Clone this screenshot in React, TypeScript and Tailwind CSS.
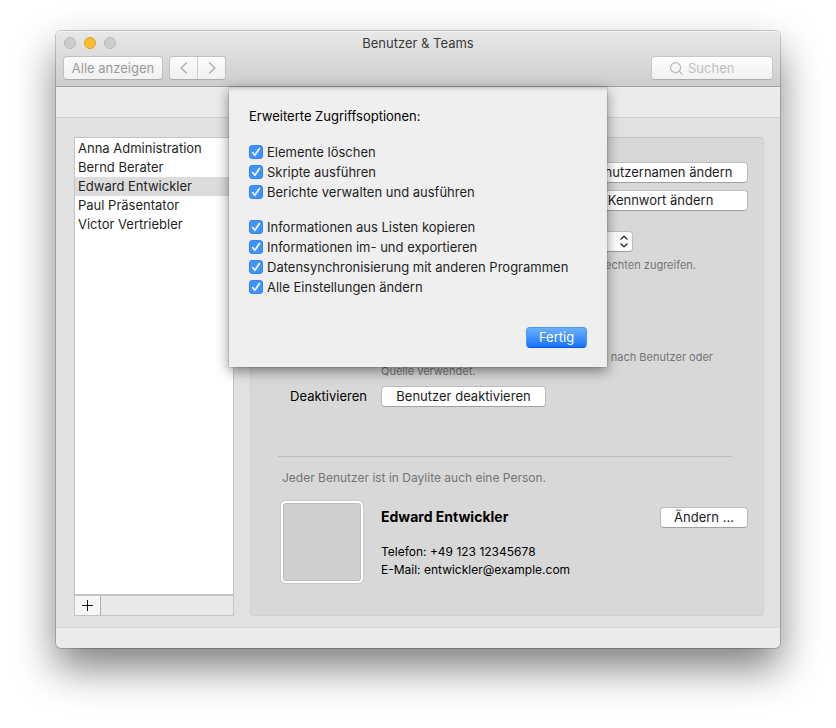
import { useState } from "react";
import type { ReactNode } from "react";

const users = [
  "Anna Administration",
  "Bernd Berater",
  "Edward Entwickler",
  "Paul Präsentator",
  "Victor Vertriebler",
];

const optionGroups = [
  ["Elemente löschen", "Skripte ausführen", "Berichte verwalten und ausführen"],
  [
    "Informationen aus Listen kopieren",
    "Informationen im- und exportieren",
    "Datensynchronisierung mit anderen Programmen",
    "Alle Einstellungen ändern",
  ],
];

function PushButton({ children, className = "" }: { children: ReactNode; className?: string }) {
  return (
    <button
      className={`h-[21px] shrink-0 rounded-[4px] border border-[#bdbdbd] border-b-[#a0a0a0] bg-white text-center leading-[19px] text-[#1c1c1c] ${className}`}
    >
      {children}
    </button>
  );
}

function CheckOption({ label }: { label: string }) {
  const [checked, setChecked] = useState(true);

  return (
    <label className="flex h-5 items-center gap-1">
      <span className="relative block size-[14px]">
        <input
          type="checkbox"
          checked={checked}
          onChange={(e) => setChecked(e.target.checked)}
          className="peer block size-[14px] appearance-none rounded-[3px] border border-[#b5b5b5] bg-white checked:border-[#3586f5] checked:bg-[#3f93fb]"
        />
        <svg
          viewBox="0 0 14 14"
          className="pointer-events-none absolute inset-0 hidden size-[14px] peer-checked:block"
          fill="none"
          stroke="white"
          strokeWidth="1.6"
          strokeLinecap="round"
          strokeLinejoin="round"
        >
          <path d="M3.6 7.6 5.9 10.3 10.4 3.5" />
        </svg>
      </span>
      <span>{label}</span>
    </label>
  );
}

function Toolbar() {
  return (
    <header className="rounded-t-[5px] border-b border-[#a3a3a3] bg-linear-to-b from-[#e8e8e8] to-[#cdcdcd] shadow-[inset_0_1px_0_#f4f4f4]">
      <div className="grid h-6 grid-cols-[1fr_auto_1fr] items-center px-2">
        <div className="flex gap-2">
          <span className="size-3 rounded-full border border-[#b9b9b9] bg-[#cdcdcd]" />
          <span className="size-3 rounded-full border border-[#e0a02c] bg-[#fdbd2f]" />
          <span className="size-3 rounded-full border border-[#b9b9b9] bg-[#cdcdcd]" />
        </div>
        <h1 className="text-[#3a3a3a]">Benutzer &amp; Teams</h1>
      </div>
      <div className="flex h-[31px] items-start px-[7px] pt-px">
        <button className="h-6 w-[100px] rounded-[4px] border border-[#c0c0c0] border-b-[#ababab] bg-linear-to-b from-[#fbfbfb] to-[#f1f1f1] text-[#9a9a9a]">
          Alle anzeigen
        </button>
        <div className="ml-[6px] flex h-6 w-[57px] rounded-[4px] border border-[#c0c0c0] border-b-[#ababab] bg-linear-to-b from-[#fbfbfb] to-[#f1f1f1] text-[#b0b0b0]">
          <button aria-label="Zurück" className="flex flex-1 items-center justify-center border-r border-[#cfcfcf]">
            <svg width="8" height="12" viewBox="0 0 8 12" fill="none" stroke="currentColor" strokeWidth="1.5">
              <path d="M6.8.5 1.2 6l5.6 5.5" />
            </svg>
          </button>
          <button aria-label="Vorwärts" className="flex flex-1 items-center justify-center">
            <svg width="8" height="12" viewBox="0 0 8 12" fill="none" stroke="currentColor" strokeWidth="1.5">
              <path d="M1.2.5 6.8 6l-5.6 5.5" />
            </svg>
          </button>
        </div>
        <label className="ml-auto flex h-6 w-[122px] items-center gap-[5px] rounded-[4px] border border-[#c8c8c8] border-b-[#ababab] bg-linear-to-b from-[#fdfdfd] to-[#f1f1f1] pl-[18px]">
          <svg
            className="shrink-0"
            width="13"
            height="13"
            viewBox="0 0 13 13"
            fill="none"
            stroke="#b4b4b4"
            strokeWidth="1.1"
          >
            <circle cx="5.6" cy="5.6" r="5" />
            <path d="m9.1 9.1 3.5 3.5" />
          </svg>
          <input
            type="search"
            aria-label="Suchen"
            placeholder="Suchen"
            className="w-full min-w-0 bg-transparent outline-none placeholder:text-[#c0c0c0]"
          />
        </label>
      </div>
    </header>
  );
}

function UserList() {
  const [selected, setSelected] = useState(users[2]);

  return (
    <aside className="flex w-40 shrink-0 flex-col">
      <ul className="flex-1 border border-[#c4c4c4] bg-white pt-px">
        {users.map((user) => (
          <li key={user}>
            <button
              onClick={() => setSelected(user)}
              className={`block h-[19px] w-full pl-[3px] text-left leading-[19px] ${
                user === selected ? "bg-[#dcdcdc]" : ""
              }`}
            >
              {user}
            </button>
          </li>
        ))}
      </ul>
      <div className="flex h-[21px] border border-[#c4c4c4] bg-[#e9e9e9]">
        <button
          aria-label="Benutzer hinzufügen"
          className="flex w-[26px] items-center justify-center border-r border-[#b0b0b0] bg-[#f6f6f6]"
        >
          <svg width="11" height="11" viewBox="0 0 11 11" stroke="#111" strokeWidth="1">
            <path d="M5.5 0v11M0 5.5h11" />
          </svg>
        </button>
      </div>
    </aside>
  );
}

function UserPanel() {
  return (
    <section className="min-w-0 flex-1 rounded-[4px] border border-[#d0d0d0] border-t-[#c6c6c6] bg-[#d8d8d8] pt-6 pr-[15px] pb-8 pl-[27px]">
      <div className="flex flex-col items-end gap-[7px]">
        <PushButton className="w-[175px]">Benutzernamen ändern</PushButton>
        <PushButton className="w-[175px]">Kennwort ändern</PushButton>
      </div>

      <div className="ml-[103px]">
        <div className="relative mt-5 w-[252px]">
          <select
            aria-label="Zugriff"
            className="block h-[21px] w-full appearance-none rounded-[4px] border border-[#bdbdbd] border-b-[#a0a0a0] bg-white"
          />
          <svg
            className="pointer-events-none absolute top-1 right-1"
            width="10"
            height="13"
            viewBox="0 0 10 13"
            fill="none"
            stroke="#333"
            strokeWidth="1.4"
          >
            <path d="M1.5 4.5 5 1.3l3.5 3.2M1.5 8.5 5 11.7l3.5-3.2" />
          </svg>
        </div>
        <p className="mt-[6px] mr-[52px] text-right text-[11px] leading-[14px] text-[#757575]">
          Rechten zugreifen.
        </p>
        <p className="mt-[78px] mr-[35px] text-[11px] leading-[14px] text-[#757575]">
          <span className="block text-right">nach Benutzer oder</span>
          Quelle verwendet.
        </p>
      </div>

      <div className="mt-2 flex items-start">
        <span className="w-[89px] text-right leading-5 text-black">Deaktivieren</span>
        <PushButton className="ml-[14px] w-[165px]">Benutzer deaktivieren</PushButton>
      </div>

      <hr className="mt-[49px] mr-4 border-[#bfbfbf]" />

      <p className="mt-[13px] pl-1 text-xs text-[#757575]">Jeder Benutzer ist in Daylite auch eine Person.</p>
      <div className="mt-[15px] flex pl-[3px]">
        <div className="size-[82px] shrink-0 rounded-[5px] border-2 border-white bg-[#cfcfcf] shadow-[inset_0_0_0_1px_#bdbdbd,0_0_0_1px_#cacaca]" />
        <div className="ml-[18px] flex-1 text-black">
          <div className="flex items-start justify-between pt-[6px]">
            <h2 className="text-sm leading-5 font-bold">Edward Entwickler</h2>
            <PushButton className="w-[88px]">Ändern ...</PushButton>
          </div>
          <p className="mt-[15px] text-xs leading-[18px]">
            Telefon: +49 123 12345678
            <br />
            E-Mail: entwickler@example.com
          </p>
        </div>
      </div>
    </section>
  );
}

function AccessSheet() {
  return (
    <div
      role="dialog"
      aria-labelledby="sheet-title"
      className="absolute top-14 left-1/2 w-[378px] -translate-x-1/2 bg-[#efefef] px-5 pt-[19px] pb-[19px] shadow-[inset_0_4px_4px_-3px_rgba(0,0,0,0.25),0_0_1px_rgba(0,0,0,0.5),0_4px_12px_rgba(0,0,0,0.45)]"
    >
      <h2 id="sheet-title" className="leading-5 text-black">
        Erweiterte Zugriffsoptionen:
      </h2>
      <div className="mt-4 flex flex-col gap-[15px]">
        {optionGroups.map((group) => (
          <div key={group[0]}>
            {group.map((label) => (
              <CheckOption key={label} label={label} />
            ))}
          </div>
        ))}
      </div>
      <div className="mt-[30px] flex justify-end">
        <button className="h-[21px] w-[61px] rounded-[4px] border border-[#4a98f5] border-b-[#0a55e0] bg-linear-to-b from-[#6bb0fb] to-[#1473fb] leading-[19px] text-white">
          Fertig
        </button>
      </div>
    </div>
  );
}

export default function App() {
  return (
    <div className="min-h-screen bg-white px-14 pt-[31px] pb-20 font-['Inter','Liberation_Sans',sans-serif] text-[13px] leading-4 text-[#1f1f1f]">
      <main className="relative rounded-[5px] bg-[#ebebeb] shadow-[0_0_0_1px_rgba(0,0,0,0.18),0_20px_40px_rgba(0,0,0,0.5)]">
        <Toolbar />
        <div className="h-[31px] border-b border-[#cfcfcf]" />
        <div className="flex gap-4 border-b border-[#d8d8d8] bg-[#e1e1e1] pt-[19px] pr-4 pb-[11px] pl-[18px]">
          <UserList />
          <UserPanel />
        </div>
        <div className="h-5" />
        <AccessSheet />
      </main>
    </div>
  );
}
